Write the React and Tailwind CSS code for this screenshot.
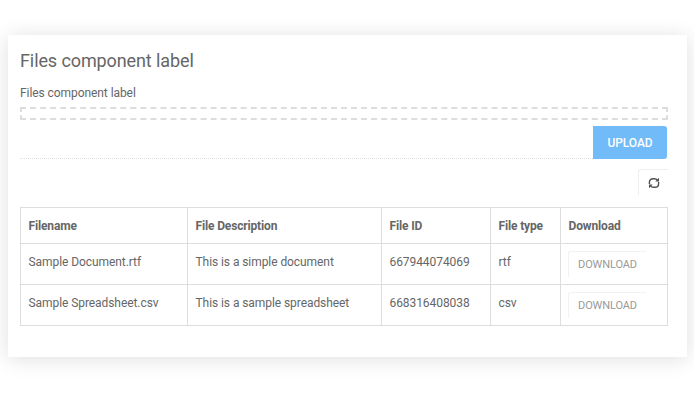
const rows = [
  ["Sample Document.rtf", "This is a simple document", "667944074069", "rtf"],
  ["Sample Spreadsheet.csv", "This is a sample spreadsheet", "668316408038", "csv"],
];

function RefreshIcon() {
  return (
    <svg className="h-[12px] w-[12px]" viewBox="0 0 12 12" fill="none" stroke="#505050" strokeWidth="1.4">
      <path d="M1.4 7V5.6Q1.4 1.7 5.2 1.7H6.6Q8.4 1.7 9.4 3.2" />
      <path d="M10.6 5V6.4Q10.6 10.3 6.8 10.3H5.4Q3.6 10.3 2.6 8.8" />
      <path d="M11 .8V4.5H7.3ZM1 11.2V7.5H4.7Z" fill="#505050" stroke="none" />
    </svg>
  );
}

export default function App() {
  return (
    <div className="h-[411px] w-[694px] overflow-hidden bg-white pl-2 pt-[35px] font-[Roboto,sans-serif] text-[12px] tracking-[-0.07px] text-[#666]">
      <section className="h-[322px] w-[679px] bg-white px-3 pt-4 shadow-[0_2px_20px_rgba(0,0,0,0.13)]">
        <h1 className="text-[18px] leading-[20px] tracking-[-0.1px]">Files component label</h1>
        <p className="mt-[13px] h-[23px] leading-[18px]">Files component label</p>
        <div className="h-[13px] w-[648px] border-2 border-dashed border-[#ddd]" />
        <div className="mt-[6px] flex h-[33px] w-[647px]">
          <div className="flex-1 border-b border-dotted border-[#ddd]" />
          <button className="w-[74px] rounded-r-[3px] bg-[#70bbf8] font-medium tracking-[-0.08px] text-white">UPLOAD</button>
        </div>
        <div className="mt-[10px] flex w-[648px] justify-end">
          <button className="flex h-[26px] w-[30px] items-center justify-center rounded-tl-[3px] border-l border-t border-[#eee]">
            <RefreshIcon />
          </button>
        </div>
        <table className="mt-[12px] w-[648px] table-fixed border-collapse text-left">
          <colgroup>
            <col className="w-[167px]" />
            <col className="w-[194px]" />
            <col className="w-[109px]" />
            <col className="w-[70px]" />
            <col className="w-[107px]" />
          </colgroup>
          <thead>
            <tr className="h-[36px]">
              {["Filename", "File Description", "File ID", "File type", "Download"].map((h) => (
                <th key={h} className="border border-[#ddd] px-[7.5px] pb-0 pt-px font-bold tracking-[-0.15px]">{h}</th>
              ))}
            </tr>
          </thead>
          <tbody>
            {rows.map((row) => (
              <tr key={row[0]} className="h-[41px]">
                {row.map((cell) => (
                  <td key={cell} className="border border-[#ddd] px-[7.5px] pb-0 pt-[9px] align-top leading-[18px]">{cell}</td>
                ))}
                <td className="border border-[#ddd] px-[7px] py-0 align-middle">
                  <button className="flex h-[26px] w-[78px] items-center justify-center rounded-tl-[3px] border-l border-t border-[#f2f2f2] pt-[2px] text-[11px] tracking-[-0.12px] text-[#999]">
                    DOWNLOAD
                  </button>
                </td>
              </tr>
            ))}
          </tbody>
        </table>
      </section>
    </div>
  );
}
